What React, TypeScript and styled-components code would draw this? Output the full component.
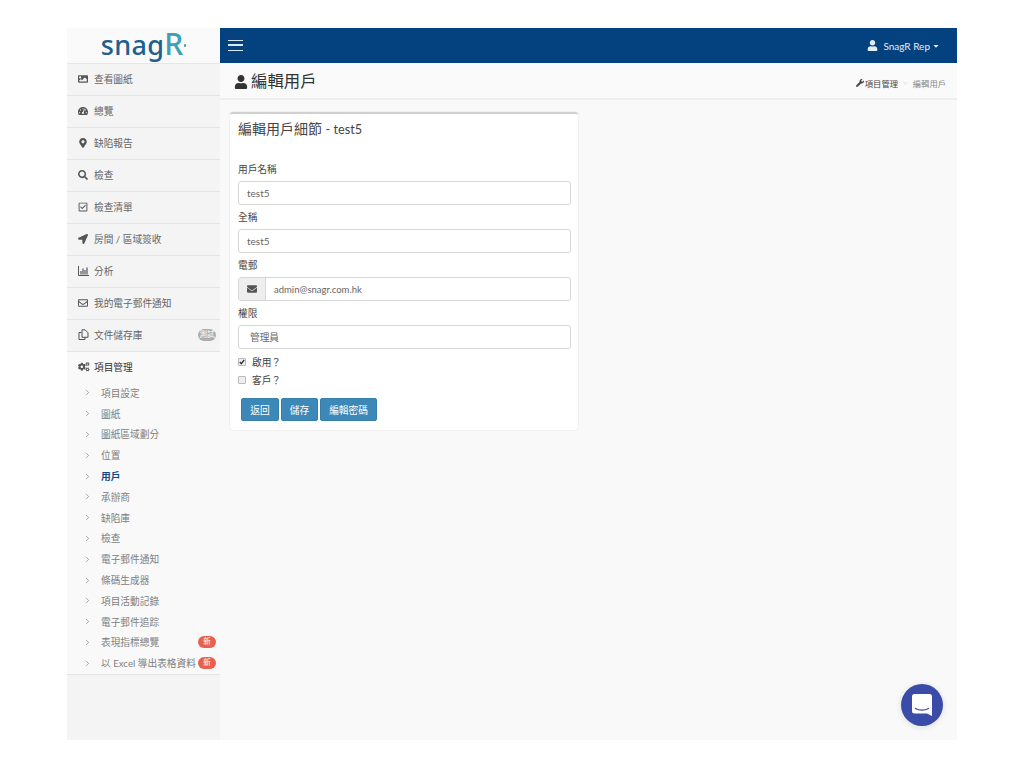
import React from "react";
import styled, { createGlobalStyle } from "styled-components";
import {
  FaImage, FaTachometerAlt, FaMapMarkerAlt, FaSearch, FaRegCheckSquare, FaLocationArrow,
  FaRegEnvelope, FaCogs, FaUser, FaEnvelope, FaWrench, FaCaretDown,
} from "react-icons/fa";
import { ChevronRight } from "lucide-react";

const Global = createGlobalStyle`
  html, body { margin: 0; padding: 0; background: #fff; }
  body { font-family: "Lato", "Noto Sans CJK TC", sans-serif; color: #333; }
  * { box-sizing: border-box; }
`;

const Frame = styled.div`
  width: 890px; height: 712px; margin: 28px auto 0; display: flex; background: #f9f9f9; position: relative;
`;
const Side = styled.aside`
  width: 153px; flex: none; background: #f4f4f5; display: flex; flex-direction: column;
`;
const Logo = styled.div`
  height: 36px; background: #fafafa; border-bottom: 1px solid #e6e6e6; display: flex; align-items: baseline; justify-content: center;
  font-family: "Noto Sans", sans-serif; font-size: 27px; line-height: 31px; font-weight: 500; letter-spacing: 0.3px; color: #20608f;
`;
const LogoR = styled.span`
  color: #3f9fb5; font-size: 30px; font-weight: 500; letter-spacing: 0; position: relative; padding-right: 3px;
  &::after { content: ""; position: absolute; right: 0; top: 16px; width: 2.5px; height: 2.5px; border-radius: 50%; background: #3f9fb5; }
`;
const MenuRow = styled.div<{ $active?: boolean }>`
  height: ${p => (p.$active ? "31px" : "32px")}; display: flex; align-items: center; padding: 0 4px 2px 11px; font-size: 9.7px;
  color: ${p => (p.$active ? "#333" : "#666")};
  background: ${p => (p.$active ? "#f9f9f9" : "#f4f4f5")};
  border-bottom: ${p => (p.$active ? "0" : "1px solid #e4e4e4")};
`;
const MenuIcon = styled.span<{ $big?: boolean }>`
  width: 16px; flex: none; display: flex; align-items: center; justify-content: flex-start; font-size: ${p => (p.$big ? "11.5px" : "10px")}; color: #555;
`;
const MenuText = styled.span`
  flex: 1; white-space: nowrap;
`;
const Pill = styled.span<{ $red?: boolean }>`
  width: 18px; height: 12px; border-radius: 6px; background: ${p => (p.$red ? "#e9604f" : "#adadad")}; color: #fff;
  font-size: 7.5px; line-height: 12px; text-align: center; flex: none;
`;
const SubList = styled.div`
  background: #f9f9f9; border-bottom: 1px solid #e4e4e4; display: flex; flex-direction: column;
`;
const SubRow = styled.div<{ $active?: boolean }>`
  height: 20.8px; display: flex; align-items: center; padding: 0 4px 1px 16px; font-size: 9.7px;
  color: ${p => (p.$active ? "#0c4a8a" : "#808080")}; font-weight: ${p => (p.$active ? 700 : 400)};
`;
const Chevron = styled.span`
  width: 18px; flex: none; display: flex; align-items: center; color: #666;
`;
const Main = styled.main`
  flex: 1; display: flex; flex-direction: column; min-width: 0;
`;
const Nav = styled.header`
  height: 35px; background: #04417f; color: #fff; display: flex; align-items: center; justify-content: space-between; padding: 0 17px 0 8px;
`;
const Burger = styled.span`
  width: 15px; height: 11px; border-top: 1.5px solid #dce6f0; border-bottom: 1.5px solid #dce6f0; position: relative; display: block;
  &::after { content: ""; position: absolute; left: 0; right: 0; top: 3.2px; height: 1.5px; background: #dce6f0; }
`;
const NavUser = styled.div`
  display: flex; align-items: center; gap: 2px; font-size: 10px; color: #e4edf5;
`;
const NavIcon = styled.span`
  display: flex; font-size: 11px; margin-right: 3px;
`;
const TitleBar = styled.div`
  height: 37px; background: #fafafa; border-bottom: 2px solid #eeeeee; display: flex; align-items: center; justify-content: space-between; padding: 2px 11px 0 14px;
`;
const Title = styled.h1`
  margin: 0; font-size: 16.4px; font-weight: 400; color: #333; display: flex; align-items: center; gap: 3px; line-height: 1;
`;
const TitleIcon = styled.span`
  display: flex; font-size: 14px; color: #333;
`;
const Crumbs = styled.div`
  display: flex; align-items: center; gap: 5px; font-size: 8.3px; color: #444; padding-top: 3px;
`;
const CrumbHome = styled.span`
  display: flex; align-items: center; gap: 1px;
`;
const CrumbSep = styled.span`
  color: #ddd;
`;
const CrumbNow = styled.span`
  color: #888;
`;
const Content = styled.div`
  padding: 12px 10px;
`;
const Card = styled.section`
  width: 348px; height: 318px; background: #fff; border-top: 2px solid #d0d0d0; border-radius: 3px; box-shadow: 0 0 2px rgba(0,0,0,0.12);
  padding: 6px 7px 0 8px; display: flex; flex-direction: column;
`;
const CardTitle = styled.h3`
  margin: 0; font-size: 14px; line-height: 18px; font-weight: 400; color: #444; height: 37px;
`;
const CardTitleLatin = styled.span`
  font-size: 12.7px;
`;
const Label = styled.label`
  display: block; font-size: 9.7px; line-height: 24px; height: 24px; color: #444;
`;
const Input = styled.div`
  height: 24px; border: 1px solid #d6d6d6; border-radius: 3px; background: #fff; display: flex; align-items: center; padding: 0 8px; font-size: 10px; color: #666;
`;
const SelectBox = styled(Input)`
  padding-left: 11px; font-size: 9.7px;
`;
const Group = styled.div`
  height: 24px; display: flex; border: 1px solid #d6d6d6; border-radius: 3px; background: #fff; overflow: hidden;
`;
const Addon = styled.span`
  width: 27px; flex: none; background: #eee; border-right: 1px solid #d6d6d6; display: flex; align-items: center; justify-content: center; font-size: 10px; color: #555;
`;
const GroupText = styled.span`
  flex: 1; padding-left: 8px; display: flex; align-items: center; font-size: 9.5px; color: #666;
`;
const Checks = styled.div`
  margin-top: 4px; display: flex; flex-direction: column;
`;
const CheckRow = styled.div`
  height: 18px; display: flex; align-items: center; gap: 6px; font-size: 9.7px; color: #444;
`;
const Box = styled.span`
  width: 8px; height: 8px; border: 1px solid #bbb; border-radius: 1px; background: #eee; display: flex; align-items: center; justify-content: center;
`;
const Buttons = styled.div`
  margin-top: 9px; padding-left: 3px; display: flex; gap: 2px;
`;
const Btn = styled.button<{ $w: number }>`
  width: ${p => p.$w}px; height: 23px; padding: 0; border: 1px solid #367fa9; border-radius: 2px; background: #3c88b8; color: #fff; font-family: inherit; font-size: 9.7px;
`;
const Chat = styled.div`
  position: absolute; right: 14px; bottom: 14px; width: 42px; height: 42px; border-radius: 50%; background: #3b4ba8; display: flex; align-items: center; justify-content: center;
  box-shadow: 0 1px 6px rgba(0,0,0,0.12);
`;

const menu: [React.ReactNode, string, string?][] = [
  [<FaImage />, "查看圖紙"],
  [<FaTachometerAlt />, "總覽"],
  [<FaMapMarkerAlt />, "缺陷報告"],
  [<FaSearch />, "檢查"],
  [<FaRegCheckSquare />, "檢查清單"],
  [<FaLocationArrow />, "房間 / 區域簽收"],
  [
    <svg width="11" height="10" viewBox="0 0 11 10" fill="none" stroke="#555">
      <path d="M.5 0v9.5H11" />
      <path d="M3 8.5V5M5 8.5V2.5M7 8.5V4M9 8.5V1.5" strokeWidth="1.2" />
    </svg>,
    "分析",
  ],
  [<FaRegEnvelope />, "我的電子郵件通知"],
  [
    <svg width="11" height="11" viewBox="0 0 11 11" fill="none" stroke="#555" strokeWidth="1">
      <path d="M3.5 3.5H1v7h6V8" />
      <path d="M4 .8h3l3 3v4.5H4z" />
    </svg>,
    "文件儲存庫",
    "測試",
  ],
];

const subs: [string, boolean?, boolean?][] = [
  ["項目設定"], ["圖紙"], ["圖紙區域劃分"], ["位置"], ["用戶", true], ["承辦商"], ["缺陷庫"], ["檢查"],
  ["電子郵件通知"], ["條碼生成器"], ["項目活動記錄"], ["電子郵件追踪"], ["表現指標總覽", false, true], ["以 Excel 導出表格資料", false, true],
];

export default function App() {
  return (
    <>
      <Global />
      <Frame>
        <Side>
          <Logo>snag<LogoR>R</LogoR></Logo>
          {menu.map(([icon, text, pill]) => (
            <MenuRow key={text}>
              <MenuIcon>{icon}</MenuIcon>
              <MenuText>{text}</MenuText>
              {pill && <Pill>{pill}</Pill>}
            </MenuRow>
          ))}
          <MenuRow $active>
            <MenuIcon $big><FaCogs /></MenuIcon>
            <MenuText>項目管理</MenuText>
          </MenuRow>
          <SubList>
            {subs.map(([text, active, isNew]) => (
              <SubRow key={text} $active={active}>
                <Chevron><ChevronRight size={9} strokeWidth={1.5} /></Chevron>
                <MenuText>{text}</MenuText>
                {isNew && <Pill $red>新</Pill>}
              </SubRow>
            ))}
          </SubList>
        </Side>
        <Main>
          <Nav>
            <Burger />
            <NavUser>
              <NavIcon><FaUser /></NavIcon>
              SnagR Rep
              <FaCaretDown size={8} />
            </NavUser>
          </Nav>
          <TitleBar>
            <Title>
              <TitleIcon><FaUser /></TitleIcon>
              編輯用戶
            </Title>
            <Crumbs>
              <CrumbHome><FaWrench size={8} />項目管理</CrumbHome>
              <CrumbSep>&gt;</CrumbSep>
              <CrumbNow>編輯用戶</CrumbNow>
            </Crumbs>
          </TitleBar>
          <Content>
            <Card>
              <CardTitle>編輯用戶細節 <CardTitleLatin>- test5</CardTitleLatin></CardTitle>
              <Label>用戶名稱</Label>
              <Input>test5</Input>
              <Label>全稱</Label>
              <Input>test5</Input>
              <Label>電郵</Label>
              <Group>
                <Addon><FaEnvelope /></Addon>
                <GroupText>admin@snagr.com.hk</GroupText>
              </Group>
              <Label>權限</Label>
              <SelectBox>管理員</SelectBox>
              <Checks>
                <CheckRow>
                  <Box>
                    <svg width="6" height="6" viewBox="0 0 6 6" fill="none" stroke="#333" strokeWidth="1.3"><path d="M.8 3l1.5 1.7L5.2 1" /></svg>
                  </Box>
                  啟用？
                </CheckRow>
                <CheckRow><Box />客戶？</CheckRow>
              </Checks>
              <Buttons>
                <Btn $w={38}>返回</Btn>
                <Btn $w={37}>儲存</Btn>
                <Btn $w={57}>編輯密碼</Btn>
              </Buttons>
            </Card>
          </Content>
        </Main>
        <Chat>
          <svg width="20" height="22" viewBox="0 0 20 22">
            <path d="M2.5 0h15A2.5 2.5 0 0 1 20 2.5V22l-5-2.5H2.5A2.5 2.5 0 0 1 0 17V2.5A2.5 2.5 0 0 1 2.5 0z" fill="#fff" />
            <path d="M3.5 14.5c3.5 2.2 9.5 2.2 13 0" fill="none" stroke="#3b4ba8" strokeWidth="1.4" strokeLinecap="round" />
          </svg>
        </Chat>
      </Frame>
    </>
  );
}
